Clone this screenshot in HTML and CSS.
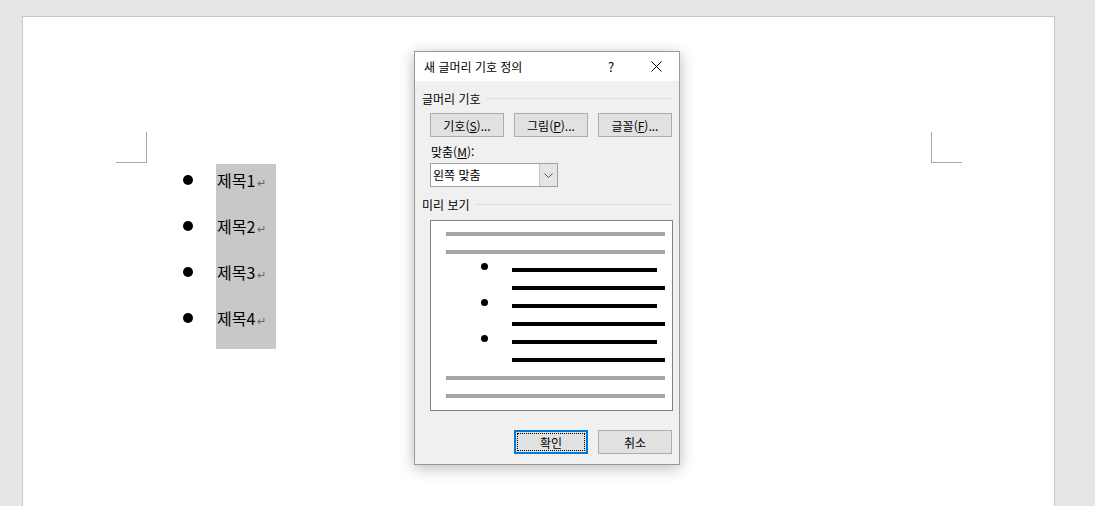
FILE: index.html
```html
<!DOCTYPE html>
<html lang="ko">
<head>
    <meta charset="UTF-8">
    <meta name="viewport" content="width=device-width, initial-scale=1.0">
    <title>새 글머리 기호 정의</title>
    <link rel="stylesheet" href="styles.css">
</head>
<body>
    <div class="page">
        <div class="marks">
            <div class="mark mark-left"></div>
            <div class="mark mark-right"></div>
        </div>
        <div class="doc-list">
            <div class="bullets">
                <div class="bullet-row"><span class="dot"></span></div>
                <div class="bullet-row"><span class="dot"></span></div>
                <div class="bullet-row"><span class="dot"></span></div>
                <div class="bullet-row"><span class="dot"></span></div>
            </div>
            <div class="titles">
                <div class="title-row">제목1<span class="para">↵</span></div>
                <div class="title-row">제목2<span class="para">↵</span></div>
                <div class="title-row">제목3<span class="para">↵</span></div>
                <div class="title-row">제목4<span class="para">↵</span></div>
            </div>
        </div>
    </div>

    <!-- Dialog floats over the document -->
    <div class="dialog">
        <div class="titlebar">
            <span class="dlg-title">새 글머리 기호 정의</span>
            <span class="help">?</span>
            <span class="close">
                <svg width="11" height="11" viewBox="0 0 11 11">
                    <path d="M0.5 0.5 L10.5 10.5 M10.5 0.5 L0.5 10.5" stroke="#000" stroke-width="1" fill="none"/>
                </svg>
            </span>
        </div>
        <div class="dlg-body">
            <div class="group-label"><span>글머리 기호</span><span class="rule"></span></div>
            <div class="btn-row">
                <button class="btn">기호(<u>S</u>)...</button>
                <button class="btn">그림(<u>P</u>)...</button>
                <button class="btn">글꼴(<u>F</u>)...</button>
            </div>
            <div class="field-label">맞춤(<u>M</u>):</div>
            <div class="select">
                <span class="select-text">왼쪽 맞춤</span>
                <span class="select-arrow">
                    <svg width="9" height="5" viewBox="0 0 9 5">
                        <path d="M0.5 0.5 L4.5 4.5 L8.5 0.5" stroke="#555" stroke-width="1" fill="none"/>
                    </svg>
                </span>
            </div>
            <div class="group-label preview-label"><span>미리 보기</span><span class="rule"></span></div>
            <div class="preview">
                <div class="ln gray"></div>
                <div class="ln gray"></div>
                <div class="pv-item">
                    <span class="pv-dot"></span>
                    <div class="pv-lines">
                        <div class="ln black short"></div>
                        <div class="ln black long"></div>
                    </div>
                </div>
                <div class="pv-item">
                    <span class="pv-dot"></span>
                    <div class="pv-lines">
                        <div class="ln black short"></div>
                        <div class="ln black long"></div>
                    </div>
                </div>
                <div class="pv-item">
                    <span class="pv-dot"></span>
                    <div class="pv-lines">
                        <div class="ln black short"></div>
                        <div class="ln black long"></div>
                    </div>
                </div>
                <div class="ln gray"></div>
                <div class="ln gray"></div>
            </div>
            <div class="footer">
                <button class="btn btn-ok">확인</button>
                <button class="btn">취소</button>
            </div>
        </div>
    </div>
</body>
</html>
```

FILE: styles.css
```css
body {
    margin: 0;
    height: 506px;
    overflow: hidden;
    background: #e6e6e6;
    padding: 16px 0 0 22px;
    box-sizing: border-box;
    font-family: "Noto Sans CJK KR", "Noto Sans", sans-serif;
}

.page {
    width: 1033px;
    height: 500px;
    box-sizing: border-box;
    background: #fff;
    border: 1px solid #c6c6c6;
    border-bottom: none;
}

/* corner marks of the text area */
.marks {
    display: flex;
    justify-content: space-between;
    margin-top: 115px;
    padding: 0 92px 0 93px;
}

.mark {
    width: 31px;
    height: 31px;
    box-sizing: border-box;
    border-bottom: 1px solid #a6a6a6;
}

.mark-left {
    border-right: 1px solid #a6a6a6;
}

.mark-right {
    border-left: 1px solid #a6a6a6;
}

.doc-list {
    display: flex;
    margin: 1px 0 0 160px;
}

.bullets {
    width: 33px;
}

.bullet-row,
.title-row {
    height: 32px;
    margin-bottom: 14px;
    display: flex;
    align-items: center;
}

.dot {
    width: 10px;
    height: 10px;
    border-radius: 50%;
    background: #000;
}

.titles {
    width: 60px;
    background: #c8c8c8;
    padding: 0 0 1px 1px;
    box-sizing: border-box;
    font-size: 16px;
    color: #000;
}

.para {
    font-size: 11px;
    color: #666;
    margin: 3px 0 0 2px;
}

/* dialog */
.dialog {
    position: absolute;
    left: 414px;
    top: 51px;
    width: 266px;
    height: 414px;
    box-sizing: border-box;
    background: #f0f0f0;
    border: 1px solid #9a9a9a;
    box-shadow: 0 3px 14px rgba(0, 0, 0, 0.28);
    font-size: 12px;
    color: #000;
}

.titlebar {
    height: 29px;
    background: #fff;
    display: flex;
    align-items: center;
}

.dlg-title {
    flex: 1;
    padding-left: 9px;
}

.help {
    width: 44px;
    text-align: center;
    font-size: 13px;
}

.close {
    width: 46px;
    display: flex;
    justify-content: center;
}

.dlg-body {
    padding: 0 7px 0 7px;
}

.group-label {
    display: flex;
    align-items: center;
    height: 16px;
    margin-top: 9px;
}

.rule {
    flex: 1;
    height: 1px;
    background: #dcdcdc;
    margin-left: 6px;
}

.btn-row {
    display: flex;
    gap: 10px;
    margin: 7px 0 0 8px;
}

.btn {
    width: 74px;
    height: 24px;
    box-sizing: border-box;
    background: #e1e1e1;
    border: 1px solid #adadad;
    font-family: inherit;
    font-size: 12px;
    color: #000;
    padding: 0;
}

.field-label {
    height: 16px;
    line-height: 16px;
    margin: 7px 0 0 9px;
}

.select {
    width: 128px;
    height: 24px;
    box-sizing: border-box;
    margin: 3px 0 0 8px;
    background: #fff;
    border: 1px solid #a0a0a0;
    display: flex;
    align-items: stretch;
}

.select-text {
    flex: 1;
    padding-left: 2px;
    line-height: 22px;
}

.select-arrow {
    width: 17px;
    background: #e5e5e5;
    border-left: 1px solid #c4c4c4;
    display: flex;
    align-items: center;
    justify-content: center;
}

.preview-label {
    margin-top: 9px;
}

.preview {
    width: 243px;
    height: 191px;
    box-sizing: border-box;
    margin: 8px 0 0 8px;
    background: #fff;
    border: 1px solid #838383;
    padding: 11px 0 0 15px;
    display: flex;
    flex-direction: column;
    gap: 14px;
}

.ln {
    height: 4px;
}

.gray {
    width: 219px;
    background: #a5a5a5;
}

.black {
    background: #000;
}

.short {
    width: 145px;
}

.long {
    width: 153px;
}

.pv-item {
    display: flex;
}

.pv-dot {
    width: 7px;
    height: 7px;
    border-radius: 50%;
    background: #000;
    margin: -5px 24px 0 35px;
}

.pv-lines {
    display: flex;
    flex-direction: column;
    gap: 14px;
}

.footer {
    display: flex;
    justify-content: flex-end;
    gap: 10px;
    margin-top: 19px;
}

.btn-ok {
    border: 2px solid #0078d7;
    outline: 1px dotted #000;
    outline-offset: -4px;
}
```
